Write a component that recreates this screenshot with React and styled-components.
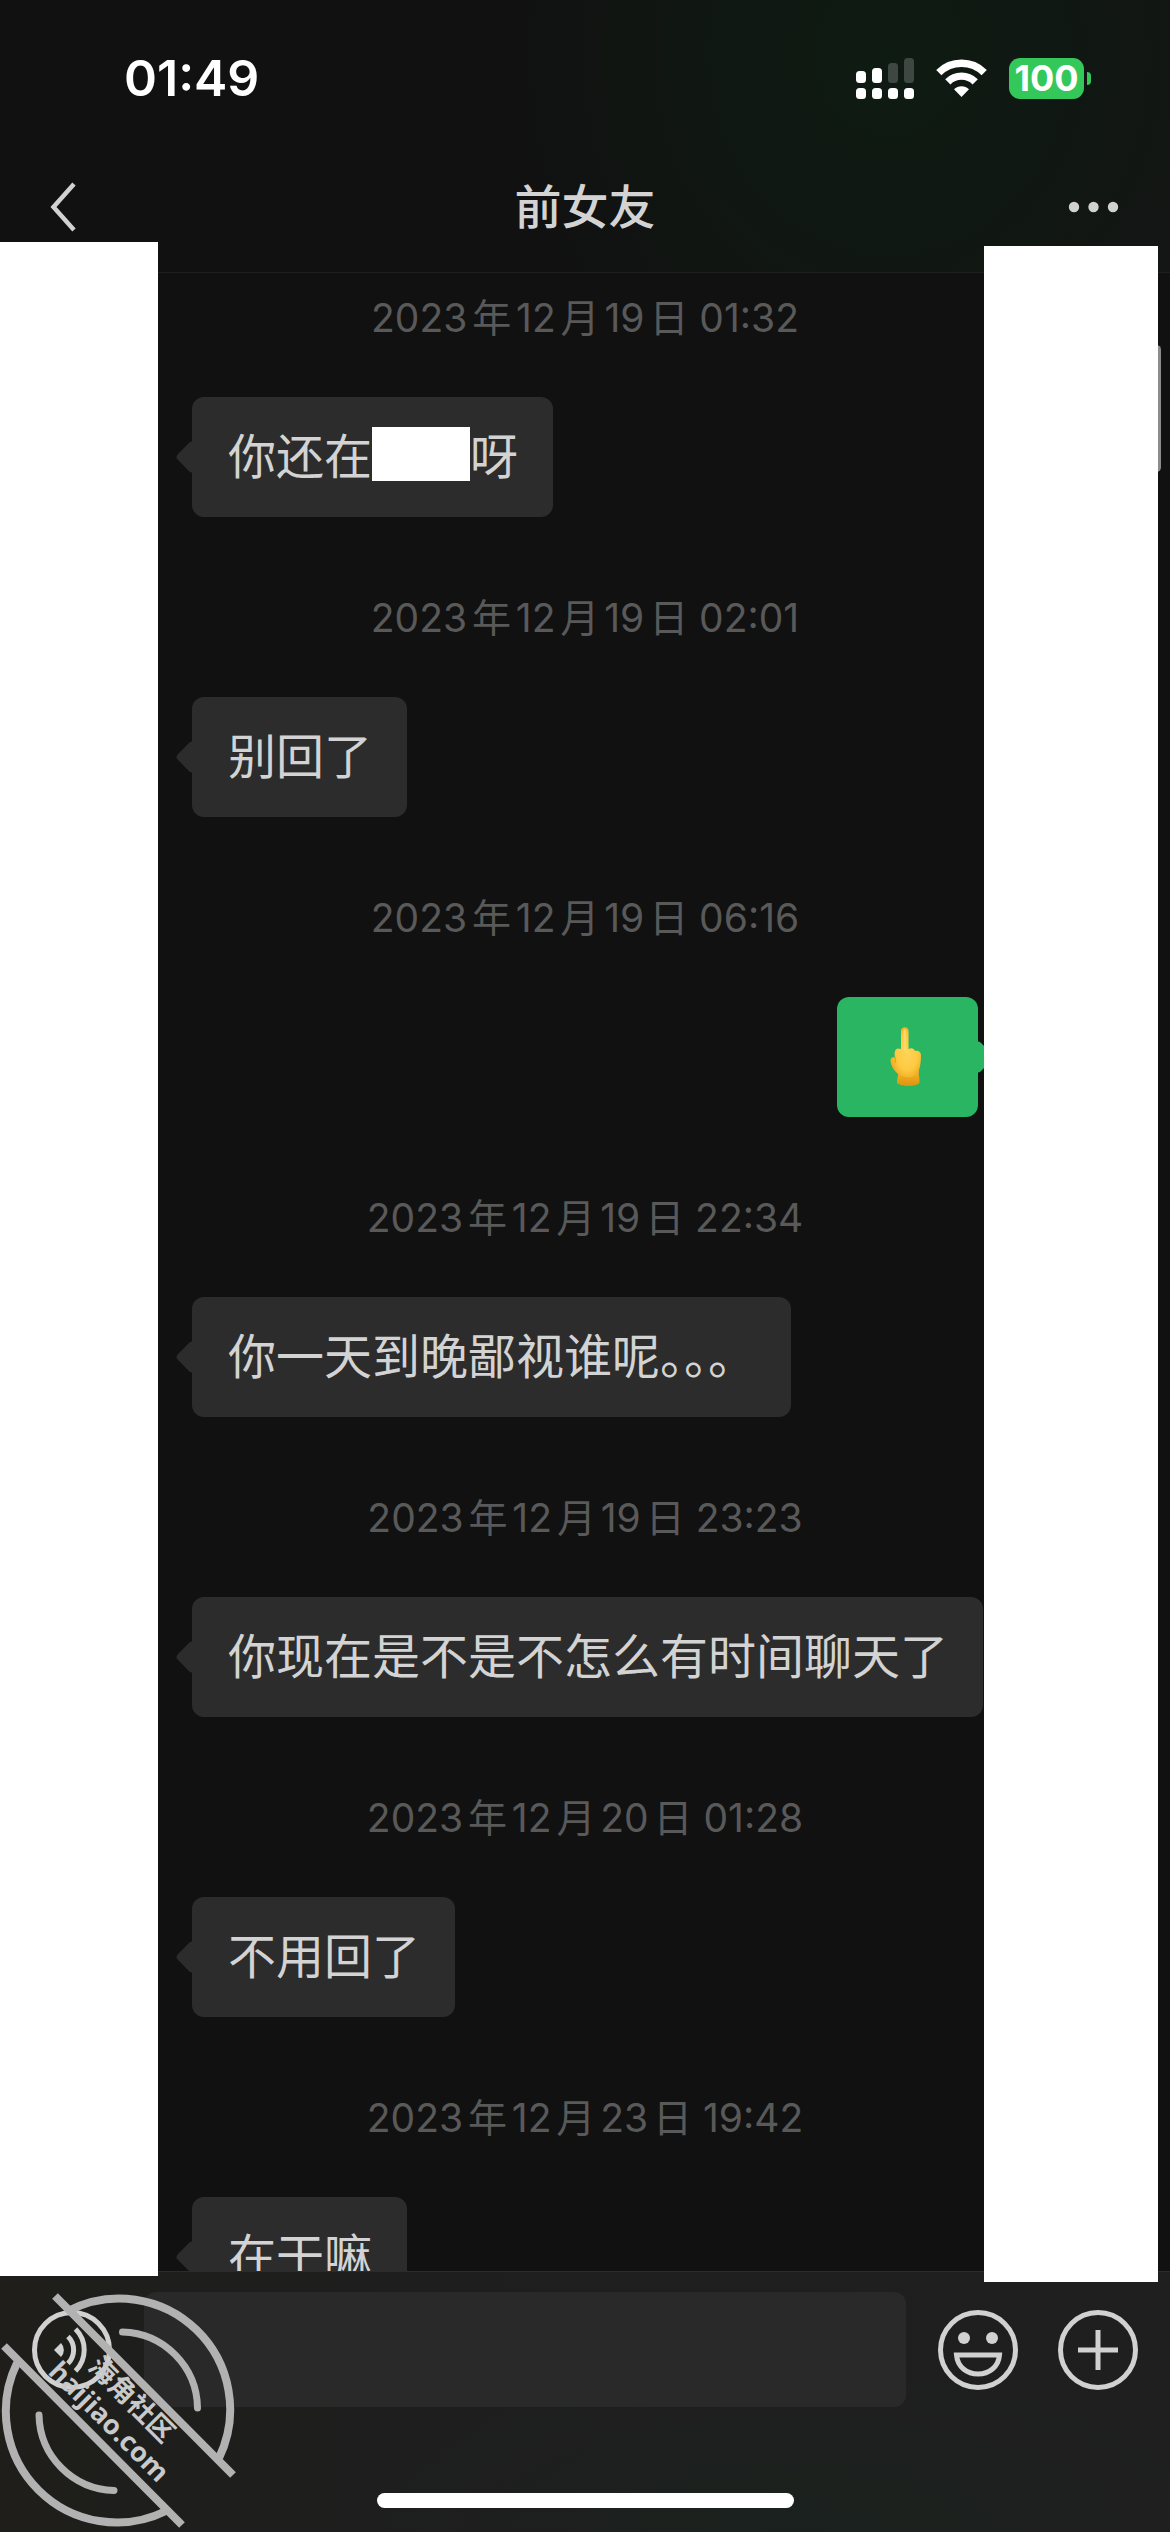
import React from 'react';
import styled, { createGlobalStyle, css } from 'styled-components';

const GlobalStyle = createGlobalStyle`
  * {
    box-sizing: border-box;
  }

  body {
    margin: 0;
    background-color: #111111;
    color: #d3d3d3;
    font-family: Inter, 'Noto Sans CJK SC', sans-serif;
  }
`;

const Screen = styled.div`
  position: relative;
  display: flex;
  flex-direction: column;
  height: 100vh;
  overflow: hidden;
`;

const Header = styled.header`
  background: radial-gradient(ellipse 380px 420px at 76% 20%, #0e1b12 0%, #101712 50%, transparent 100%),
    linear-gradient(to right, #111111 60%, #151515);
  border-bottom: 1px solid #1f1f1f;
`;

const StatusBar = styled.div`
  display: flex;
  align-items: center;
  justify-content: space-between;
  height: 140px;
  padding: 16px 79px 0 124px;
  color: #ffffff;
`;

const Time = styled.time`
  font-size: 50px;
  font-weight: 600;
  line-height: 60px;
`;

const StatusIcons = styled.div`
  display: flex;
  align-items: center;
  gap: 22px;
`;

const Battery = styled.div`
  display: flex;
  align-items: center;
  gap: 3px;
`;

const BatteryBody = styled.div`
  width: 75px;
  height: 41px;
  border-radius: 11px;
  background-color: #34c85a;
  font-size: 36px;
  font-weight: 700;
  line-height: 41px;
  text-align: center;
`;

const BatteryCap = styled.div`
  width: 4px;
  height: 13px;
  border-radius: 0 4px 4px 0;
  background-color: #34c85a;
`;

const NavBar = styled.div`
  display: grid;
  grid-template-columns: 80px 1fr 80px;
  align-items: center;
  height: 132px;
  padding: 2px 50px 0;
`;

const Title = styled.h1`
  margin: 0;
  font-size: 47px;
  font-weight: 500;
  line-height: 60px;
  text-align: center;
`;

const IconButton = styled.button`
  display: flex;
  flex: none;
  justify-content: ${({ $align }) => $align || 'center'};
  padding: 0;
  border: 0;
  background: none;
  color: #d1d1d1;
`;

const Chat = styled.main`
  display: flex;
  flex: 1;
  flex-direction: column;
  gap: 81px;
  min-height: 0;
  padding: 25px 192px 0;
  overflow: hidden;
`;

const Entry = styled.section`
  display: flex;
  flex: none;
  flex-direction: column;
  gap: 59px;
`;

const Stamp = styled.time`
  color: #595959;
  font-size: 39px;
  line-height: 40px;
  text-align: center;
  text-autospace: normal;
  white-space: nowrap;
`;

const incoming = css`
  align-self: flex-start;
  background-color: #2c2c2c;
`;

const outgoing = css`
  align-self: flex-end;
  background-color: #29b561;
`;

const Bubble = styled.p`
  position: relative;
  display: flex;
  align-items: center;
  height: 120px;
  margin: 0;
  padding: 0 35px 0 36px;
  border-radius: 12px;
  font-size: 48px;
  line-height: 60px;
  white-space: nowrap;
  ${({ $mine }) => ($mine ? outgoing : incoming)}

  &::before {
    content: '';
    position: absolute;
    top: 48px;
    ${({ $mine }) => ($mine ? 'right: -12px;' : 'left: -12px;')}
    width: 24px;
    height: 24px;
    border-radius: 4px;
    background-color: inherit;
    transform: rotate(45deg);
  }
`;

const Redacted = styled.span`
  width: 98px;
  height: 54px;
  margin-bottom: 6px;
  background-color: #ffffff;
`;

const Footer = styled.footer`
  display: flex;
  flex-direction: column;
  justify-content: space-between;
  height: 261px;
  padding: 20px 32px 24px;
  border-top: 1px solid #2b2b2b;
  background: radial-gradient(ellipse 420px 160px at 68% 100%, #1a211d, transparent),
    linear-gradient(to right, #1f1e1b, #1e1e1e 30%, #1f1f1f);
`;

const InputRow = styled.div`
  display: flex;
  align-items: center;
`;

const MessageInput = styled.input`
  flex: 1;
  min-width: 0;
  height: 115px;
  margin: 0 32px;
  padding: 0 32px;
  border: 0;
  border-radius: 12px;
  outline: 0;
  background-color: #292929;
  color: #d3d3d3;
  font-family: inherit;
  font-size: 48px;
`;

const Tools = styled.div`
  display: flex;
  gap: 40px;
`;

const HomeIndicator = styled.div`
  align-self: center;
  width: 417px;
  height: 15px;
  border-radius: 8px;
  background-color: #ffffff;
`;

const Scrollbar = styled.div`
  position: absolute;
  top: 345px;
  right: 9px;
  width: 9px;
  height: 127px;
  border-radius: 5px;
  background-color: #8c8c8c;
`;

const Cover = styled.div`
  position: absolute;
  background-color: #ffffff;
`;

const LeftCover = styled(Cover)`
  top: 242px;
  bottom: 256px;
  left: 0;
  width: 158px;
`;

const RightCover = styled(Cover)`
  top: 246px;
  right: 12px;
  bottom: 250px;
  width: 174px;
`;

const Stain = styled.svg`
  position: absolute;
  bottom: 0;
  left: 0;
  pointer-events: none;
`;

const StainText = styled.text`
  fill: #c9c9c9;
  font-family: 'Open Sans', 'Noto Sans CJK SC', sans-serif;
  font-size: 27px;
  font-weight: 700;
`;

const Signal = () => (
  <svg width="58" height="41" viewBox="0 0 58 41" fill="#fff">
    <rect x="0" y="13" width="10" height="12" rx="3.5" />
    <rect x="16" y="10" width="10" height="15" rx="3.5" />
    <rect x="32" y="5" width="10" height="20" rx="3.5" opacity="0.2" />
    <rect x="48" y="0" width="10" height="25" rx="3.5" opacity="0.2" />
    {[0, 16, 32, 48].map((x) => (
      <rect key={x} x={x} y="30" width="10" height="11" rx="3.5" />
    ))}
  </svg>
);

const Wifi = () => (
  <svg width="51" height="38" viewBox="0 0 51 38">
    <g fill="none" stroke="#fff" strokeWidth="7.4">
      <path d="M2.8 13.6A32.4 32.4 0 0 1 48.2 13.6" />
      <path d="M11.8 22.8A19.4 19.4 0 0 1 39.2 22.8" />
    </g>
    <path d="M25.5 38L18 30.3A10.6 10.6 0 0 1 33 30.3Z" fill="#fff" />
  </svg>
);

const BackIcon = () => (
  <svg width="26" height="50" viewBox="0 0 26 50" fill="none" stroke="currentColor" strokeWidth="4.5">
    <path d="M24 2L3.500 25L24 48" />
  </svg>
);

const MoreIcon = () => (
  <svg width="52" height="12" viewBox="0 0 52 12" fill="currentColor">
    <circle cx="2" cy="6" r="5.2" transform="translate(4)" />
    <circle cx="25.500" cy="6" r="5.200" />
    <circle cx="45" cy="6" r="5.200" />
  </svg>
);

const VoiceIcon = () => (
  <svg width="80" height="80" viewBox="0 0 80 80" fill="none" stroke="currentColor" strokeWidth="5">
    <circle cx="40" cy="40" r="37.500" />
    <path d="M36 26.500A19 19 0 0 1 36 53.500M43.500 19A29.700 29.700 0 0 1 43.500 61" />
    <path d="M22 40L29 33A10 10 0 0 1 29 47Z" fill="currentColor" stroke="none" />
  </svg>
);

const SmileIcon = () => (
  <svg width="80" height="80" viewBox="0 0 80 80" fill="none" stroke="currentColor" strokeWidth="5">
    <circle cx="40" cy="40" r="37.500" />
    <path d="M18.500 45H61.500C60.500 57 51 64 40 64S19.500 57 18.500 45Z" />
    <circle cx="26" cy="28" r="6" fill="currentColor" stroke="none" />
    <circle cx="54" cy="28" r="6" fill="currentColor" stroke="none" />
  </svg>
);

const PlusIcon = () => (
  <svg width="80" height="80" viewBox="0 0 80 80" fill="none" stroke="currentColor" strokeWidth="5">
    <circle cx="40" cy="40" r="37.500" />
    <path d="M40 20V60M20 40H60" />
  </svg>
);

const FingerEmoji = () => (
  <svg width="70" height="60" viewBox="0 0 70 60" role="img" aria-label="🖕">
    <defs>
      <radialGradient id="skin" cx="0.55" cy="0.5" r="0.6">
        <stop offset="0" stopColor="#ffd459" />
        <stop offset="0.6" stopColor="#fdc941" />
        <stop offset="1" stopColor="#eda61f" />
      </radialGradient>
      <linearGradient id="wrist" x1="0" y1="0" x2="0" y2="1">
        <stop offset="0" stopColor="#f6b92b" />
        <stop offset="1" stopColor="#df930d" />
      </linearGradient>
    </defs>
    <path d="M25 42H46C45 48 47 51 46.500 56C43 60 28 60 24 56C24 50 26 48 25 42Z" fill="url(#wrist)" />
    <path
      d="M28 4C28 -1 35.500 -1 35.500 4V22C38 20.500 41 21 42 24C45 23 48 25 48 28C48 34 47.500 40 45 46C40 52 32 51 27 48C22 46 17.500 38 17.500 34C17.500 30 20 29.500 22 31C21 26 21.500 22 25 21.500L28 22Z"
      fill="url(#skin)"
    />
    <path d="M22 30C22.500 33 23 34.500 22 36" fill="none" stroke="#e9a11f" strokeWidth="1.200" />
    <path d="M30.500 4C30.500 2 33 2 33 4V24H30.500Z" fill="#ffd767" />
  </svg>
);

const Watermark = () => (
  <Stain width="250" height="252" viewBox="0 0 250 252">
    <g fill="none" stroke="#b2b2b2" strokeWidth="8">
      <path d="M55 16L233 195M4 66L182 245" />
      <path d="M68 31A111 111 0 0 1 219 178M17 83A111 111 0 0 0 166 231" />
      <path d="M122.500 52A77 77 0 0 1 197.500 128M39 135A77 77 0 0 0 114 210.500" strokeLinecap="round" strokeWidth="7" />
    </g>
    <StainText transform="translate(87 88) rotate(45)">海角社区</StainText>
    <StainText transform="translate(47 93) rotate(45)">haijiao.com</StainText>
  </Stain>
);

const messages = [
  { time: '2023年12月19日 01:32', text: '你还在', after: '呀' },
  { time: '2023年12月19日 02:01', text: '别回了' },
  { time: '2023年12月19日 06:16', mine: true },
  { time: '2023年12月19日 22:34', text: '你一天到晚鄙视谁呢。。。' },
  { time: '2023年12月19日 23:23', text: '你现在是不是不怎么有时间聊天了' },
  { time: '2023年12月20日 01:28', text: '不用回了' },
  { time: '2023年12月23日 19:42', text: '在干嘛' },
];

const Message = ({ time, text, after, mine }) => (
  <Entry>
    <Stamp>{time}</Stamp>
    <Bubble $mine={mine}>
      {mine ? <FingerEmoji /> : text}
      {after && <Redacted />}
      {after}
    </Bubble>
  </Entry>
);

const App = () => (
  <>
    <GlobalStyle />
    <Screen lang="zh-CN">
      <Header>
        <StatusBar>
          <Time>01:49</Time>
          <StatusIcons>
            <Signal />
            <Wifi />
            <Battery>
              <BatteryBody>100</BatteryBody>
              <BatteryCap />
            </Battery>
          </StatusIcons>
        </StatusBar>
        <NavBar>
          <IconButton type="button" aria-label="返回" $align="flex-start">
            <BackIcon />
          </IconButton>
          <Title>前女友</Title>
          <IconButton type="button" aria-label="更多" $align="flex-end">
            <MoreIcon />
          </IconButton>
        </NavBar>
      </Header>
      <Chat>
        {messages.map((message) => (
          <Message key={message.time} {...message} />
        ))}
      </Chat>
      <Footer>
        <InputRow>
          <IconButton type="button" aria-label="语音">
            <VoiceIcon />
          </IconButton>
          <MessageInput type="text" aria-label="消息" />
          <Tools>
            <IconButton type="button" aria-label="表情">
              <SmileIcon />
            </IconButton>
            <IconButton type="button" aria-label="添加">
              <PlusIcon />
            </IconButton>
          </Tools>
        </InputRow>
        <HomeIndicator />
      </Footer>
      <Scrollbar />
      <LeftCover />
      <RightCover />
      <Watermark />
    </Screen>
  </>
);

export default App;
